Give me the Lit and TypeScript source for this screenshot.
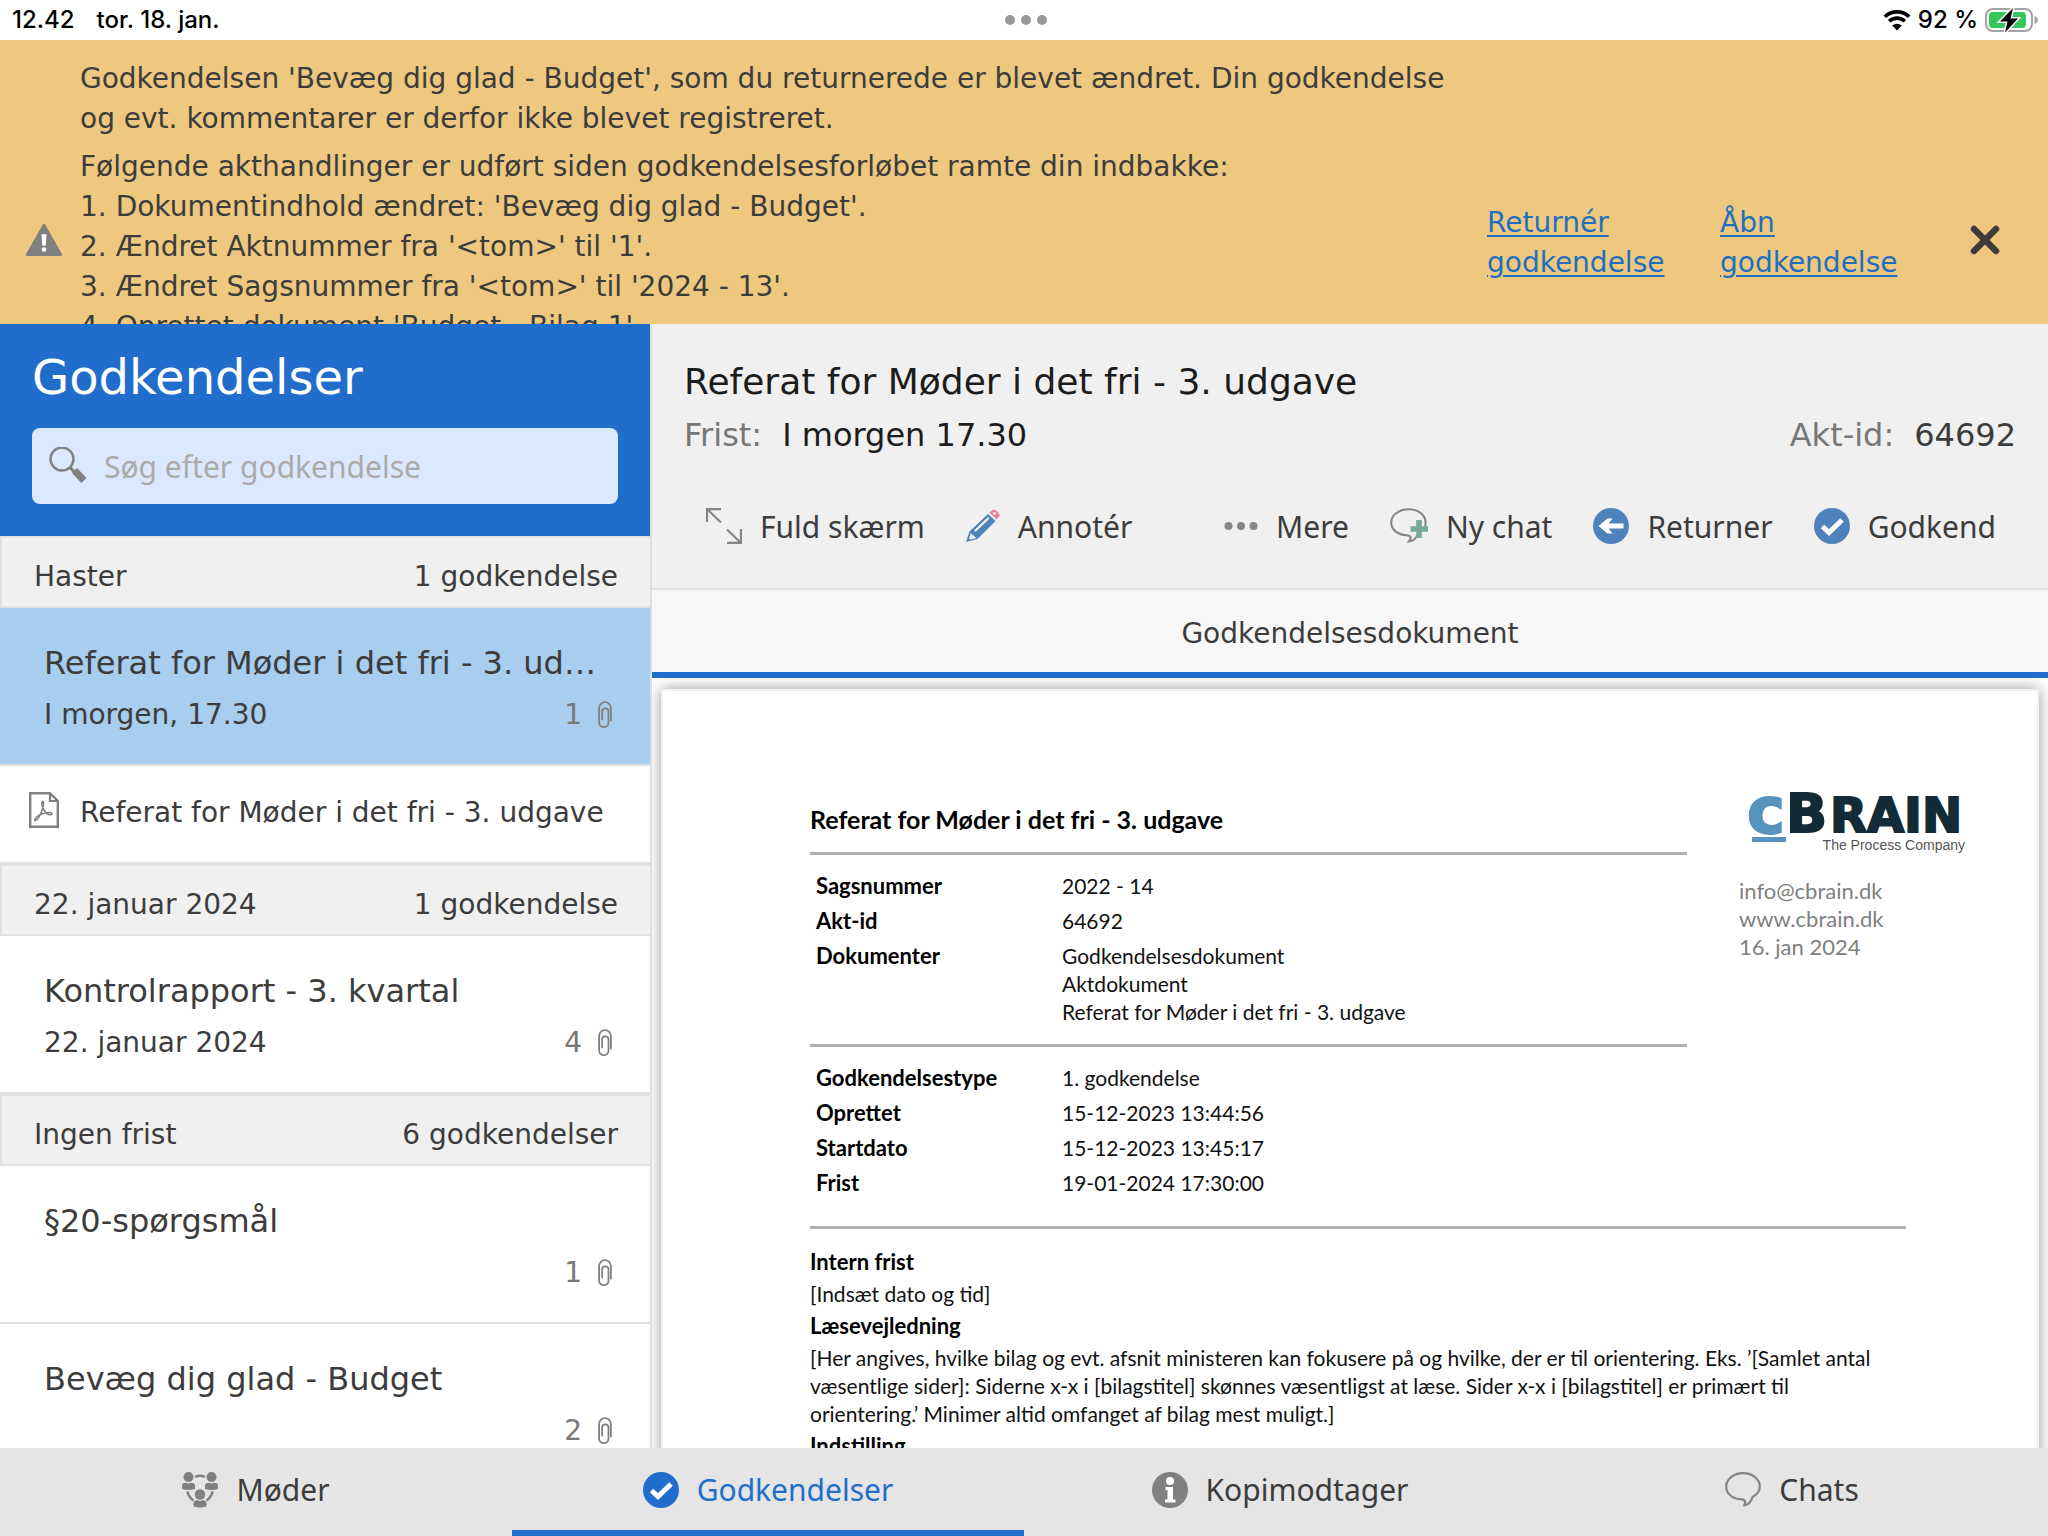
import { LitElement, html, css, svg, nothing, type TemplateResult } from "lit";
import { customElement, property, state } from "lit/decorators.js";
import { classMap } from "lit/directives/class-map.js";

const icons: Record<string, TemplateResult> = {
  warning: html`<svg width="36" height="32" viewBox="0 0 36 32" aria-hidden="true">${svg`
    <path d="M18 1.5 34.5 30.5H1.5Z" fill="#808080" stroke="#808080" stroke-width="3" stroke-linejoin="round"/>
    <path d="M16.2 11h3.6l-.7 10h-2.2z" fill="#fff" stroke="#fff" stroke-width="1.4" stroke-linejoin="round"/>
    <circle cx="18" cy="25.5" r="2.3" fill="#fff"/>`}</svg>`,
  close: html`<svg width="30" height="30" viewBox="0 0 30 30" aria-hidden="true">${svg`
    <path d="M4 4 26 26M26 4 4 26" stroke="#3c3c3c" stroke-width="6.5" stroke-linecap="round"/>`}</svg>`,
  search: html`<svg width="38" height="38" viewBox="0 0 38 38" aria-hidden="true">${svg`
    <circle cx="13" cy="12" r="11.5" fill="none" stroke="#808080" stroke-width="2.4"/>
    <path d="M21 20.5 25 24.5" stroke="#808080" stroke-width="3"/>
    <path d="M25.5 23.5 35 33.5" stroke="#808080" stroke-width="7"/>`}</svg>`,
  clip: html`<svg width="14" height="28" viewBox="0 0 14 28" aria-hidden="true">${svg`
    <path d="M12.9 19.5V7a5.9 5.9 0 0 0-11.8 0v14.5a4.7 4.7 0 0 0 9.4 0V10.5a3.2 3.2 0 0 0-6.4 0V18.5" fill="none" stroke="#808080" stroke-width="1.8" stroke-linecap="round"/>`}</svg>`,
  pdf: html`<svg width="30" height="36" viewBox="0 0 30 36" aria-hidden="true">${svg`
    <path d="M1.2 1.2H21L28.8 9V34.8H1.2Z" fill="none" stroke="#808080" stroke-width="2.4"/>
    <path d="M21 1V9H29" fill="none" stroke="#808080" stroke-width="2.2"/>
    <path d="M14 9.5c-2 0-1 4.5.6 7.8 1.6 3.2 4.6 5.6 7.2 5.4 2-.2 1.3-2.2-1.5-2.2-4.5 0-9.5 2-12 4-2.5 2-3.2 4.5-1.8 4 2-.7 4.7-5.5 6.3-9.8 1.2-3.3 2.6-9.2 1.2-9.2Z" fill="none" stroke="#808080" stroke-width="1.6"/>`}</svg>`,
  expand: html`<svg width="36" height="36" viewBox="0 0 36 36" aria-hidden="true">${svg`
    <path d="M1 14V1.2H15M1.5 1.5 15 14.5M35 21V34.8H21M34.5 34.5 21 21.5" fill="none" stroke="#858585" stroke-width="2.2"/>`}</svg>`,
  pencil: html`<svg width="34" height="34" viewBox="0 0 34 34" aria-hidden="true">${svg`
    <path d="M0 33 3.5 22.5 22 5 29.5 12 11.5 30Z" fill="#4d82bb"/>
    <path d="M9.5 21.5 22 9.5" stroke="#f0f0f0" stroke-width="2.4" stroke-linecap="round"/>
    <path d="M4.8 24.2 10.3 29 4.5 30.8 3 29.3Z" fill="#f0f0f0"/>
    <path d="M23.5 3.7 26.5 1Q28-.2 29.5 1L33 4.5Q34.2 6 33 7.5L30.6 10.5Z" fill="#e6849a"/>
    <circle cx="28.5" cy="4.5" r="1.4" fill="#f0f0f0"/>`}</svg>`,
  more: html`<svg width="34" height="10" viewBox="0 0 34 10" aria-hidden="true">${svg`
    <g fill="#858585"><circle cx="4.5" cy="5" r="4"/><circle cx="17" cy="5" r="4"/><circle cx="29.5" cy="5" r="4"/></g>`}</svg>`,
  newchat: html`<svg width="38" height="36" viewBox="0 0 38 36" aria-hidden="true">${svg`
    <path d="M35 18.5C38 8 29 1.2 18.5 1.2 8.5 1.2 1.2 7.5 1.2 14.5c0 7 6.5 12.5 15.5 12.7 4 .3 5.3 2.6 2.3 6.3 4.5-.5 7-2.8 8.3-6.5" fill="none" stroke="#858585" stroke-width="2.1"/>
    <path d="M29 12V30M20.5 21H38" stroke="#78a998" stroke-width="5.6"/>`}</svg>`,
  back: html`<svg width="36" height="36" viewBox="0 0 36 36" aria-hidden="true">${svg`
    <circle cx="18" cy="18" r="18" fill="#4d82bb"/>
    <path d="M5.5 18 14.5 10.5H19.5L15.5 15.5H30.5V20.5H15.5L19.5 25.5H14.5Z" fill="#fff"/>`}</svg>`,
  check: html`<svg width="36" height="36" viewBox="0 0 36 36" aria-hidden="true">${svg`
    <circle cx="18" cy="18" r="18" fill="currentColor"/>
    <path d="M8.5 18.5 15 24.5 28 12" fill="none" stroke="#fff" stroke-width="5"/>`}</svg>`,
  info: html`<svg width="36" height="36" viewBox="0 0 36 36" aria-hidden="true">${svg`
    <circle cx="18" cy="18" r="18" fill="#808080"/>
    <circle cx="18" cy="9" r="4" fill="#fff"/>
    <path d="M13.5 15H21V27.5H23.5V30.5H13V27.5H15.5V18H13.5Z" fill="#fff"/>`}</svg>`,
  chat: html`<svg width="36" height="36" viewBox="0 0 36 36" aria-hidden="true">${svg`
    <path d="M18 1.2C8.5 1.2 1.2 7.5 1.2 14.5c0 7 6 12 14 12.7 5 .3 6.3 2.6 3.8 6.3 5-.7 7.2-3.8 8.6-8.5 4.4-2.5 7.2-5.8 7.2-10.5C34.8 7 27.5 1.2 18 1.2Z" fill="none" stroke="#858585" stroke-width="2.2" stroke-linejoin="round"/>`}</svg>`,
  meetings: html`<svg width="36" height="36" viewBox="0 0 36 36" aria-hidden="true">${svg`
    <g fill="#808080">
      <circle cx="6.5" cy="5" r="5"/><path d="M0 17v-3q0-3.2 3.5-3.2 3 1.4 6 0 3.5 0 3.5 3.2v3q-6.5 1.8-13 0Z"/>
      <circle cx="29.5" cy="5" r="5"/><path d="M23 17v-3q0-3.2 3.5-3.2 3 1.4 6 0 3.5 0 3.5 3.2v3q-6.5 1.8-13 0Z"/>
      <circle cx="18" cy="22.5" r="5.2"/><path d="M11.5 34.5v-3q0-3.2 3.5-3.2 3 1.4 6 0 3.5 0 3.5 3.2v3q-6.5 1.8-13 0Z"/>
    </g>
    <path d="M13 4.8Q18 2.5 23 4.8M5.2 19.5Q7 25.5 11.5 28.5M30.8 19.5Q29 25.5 24.5 28.5" fill="none" stroke="#808080" stroke-width="2.5"/>`}</svg>`,
  wifi: html`<svg width="28" height="22" viewBox="0 0 28 22" aria-hidden="true">${svg`
    <path d="M1.8 7.8A17.5 17.5 0 0 1 26.2 7.8M6.2 12.3A11.2 11.2 0 0 1 21.8 12.3" fill="none" stroke="#000" stroke-width="3.6"/>
    <path d="M14 21.5 9.2 16.5Q14 12.8 18.8 16.5Z" fill="#000"/>`}</svg>`,
  battery: html`<svg width="54" height="28" viewBox="0 0 54 28" aria-hidden="true">${svg`
    <rect x="1" y="3" width="46" height="22" rx="7" fill="none" stroke="#a3a3a3" stroke-width="2"/>
    <path d="M49.5 10Q53 11.5 53 14T49.5 18Z" fill="#a3a3a3"/>
    <rect x="4" y="6" width="37" height="16" rx="4" fill="#35c759"/>
    <path d="M28 2 15 15.5H22.5L20 26.5 33 12.5H25.5Z" fill="#000" stroke="#fff" stroke-width="3" paint-order="stroke"/>`}</svg>`,
};

const shared = css`
  :host { display: block; box-sizing: border-box; font-family: "DejaVu Sans", Verdana, sans-serif; color: #3c3c3c; }
  *, *::before, *::after { box-sizing: border-box; }
  h1, h2, p, ol, ul, dl, dd { margin: 0; padding: 0; font-weight: 400; }
  ul, ol { list-style: none; }
  button { margin: 0; padding: 0; border: 0; background: none; font: inherit; color: inherit; text-align: left; cursor: pointer; }
  svg { display: block; flex: none; }
`;

@customElement("status-bar")
class StatusBar extends LitElement {
  static styles = [shared, css`
    .bar { display: grid; grid-template-columns: 1fr auto 1fr; align-items: center; height: 40px; padding: 0 9px 0 12px; background: #fff; color: #000; font: 500 24px/40px Inter, sans-serif; }
    .left { display: flex; gap: 22px; }
    .dots { display: flex; gap: 6px; }
    .dot { width: 10px; height: 10px; border-radius: 50%; background: #999; }
    .right { display: flex; justify-content: flex-end; align-items: center; gap: 7px; }
  `];
  render() {
    return html`<div class="bar">
      <div class="left"><span>12.42</span><span>tor. 18. jan.</span></div>
      <div class="dots"><span class="dot"></span><span class="dot"></span><span class="dot"></span></div>
      <div class="right">${icons.wifi}<span>92 %</span>${icons.battery}</div>
    </div>`;
  }
}

@customElement("notice-banner")
class NoticeBanner extends LitElement {
  static styles = [shared, css`
    .banner { height: 284px; background: #eec87f; overflow: hidden; }
    .row { display: flex; align-items: center; min-height: 400px; padding: 0 48px 0 26px; font-size: 28px; line-height: 40px; }
    .text { flex: 1; align-self: flex-start; padding: 19px 22px 0 18px; }
    .text p { margin-bottom: 8px; }
    .links { display: flex; gap: 56px; padding: 6px 73px 0 0; }
    .link { width: 177px; color: #1f6fc0; text-decoration: underline; text-decoration-thickness: 2px; text-underline-offset: 3px; }
  `];
  render() {
    const events = [
      "Dokumentindhold ændret: 'Bevæg dig glad - Budget'.",
      "Ændret Aktnummer fra '<tom>' til '1'.",
      "Ændret Sagsnummer fra '<tom>' til '2024 - 13'.",
      "Oprettet dokument 'Budget - Bilag 1'",
    ];
    return html`<section class="banner"><div class="row">
      ${icons.warning}
      <div class="text">
        <p>Godkendelsen 'Bevæg dig glad - Budget', som du returnerede er blevet ændret. Din godkendelse og evt. kommentarer er derfor ikke blevet registreret.</p>
        <div>Følgende akthandlinger er udført siden godkendelsesforløbet ramte din indbakke:</div>
        <ol>${events.map((e, i) => html`<li>${i + 1}. ${e}</li>`)}</ol>
      </div>
      <div class="links">
        <a class="link" href="#returner">Returnér godkendelse</a>
        <a class="link" href="#aabn">Åbn godkendelse</a>
      </div>
      <button aria-label="Luk">${icons.close}</button>
    </div></section>`;
  }
}

interface Approval { title: string; due: string; count: number; docs?: string[]; }
interface Group { name: string; total: string; items: Approval[]; }

const groups: Group[] = [
  { name: "Haster", total: "1 godkendelse", items: [
    { title: "Referat for Møder i det fri - 3. udgave", due: "I morgen, 17.30", count: 1, docs: ["Referat for Møder i det fri - 3. udgave"] }] },
  { name: "22. januar 2024", total: "1 godkendelse", items: [
    { title: "Kontrolrapport - 3. kvartal", due: "22. januar 2024", count: 4 }] },
  { name: "Ingen frist", total: "6 godkendelser", items: [
    { title: "§20-spørgsmål", due: "", count: 1 },
    { title: "Bevæg dig glad - Budget", due: "", count: 2 }] },
];

@customElement("approval-list")
class ApprovalList extends LitElement {
  static styles = [shared, css`
    :host { overflow: hidden; background: #fff; border-right: 2px solid #dfdfdf; font-size: 28px; line-height: 36px; }
    .head { height: 212px; padding: 25px 32px 32px; background: #216dcc; }
    .heading { margin-bottom: 23px; color: #fff; font-size: 48px; line-height: 56px; }
    .search { display: flex; align-items: center; gap: 17px; height: 76px; padding: 0 17px; border-radius: 8px; background: #dae9fd; }
    .input { flex: 1; min-width: 0; padding: 2px 0 0; border: 0; outline: 0; background: none; color: #3c3c3c; font: 30px/40px "Noto Sans", sans-serif; }
    .input::placeholder { color: #aaa; opacity: 1; }
    .group { display: flex; justify-content: space-between; height: 72px; padding: 21px 32px 0; border: 2px solid #e0e0e0; border-right: 0; background: #f0f0f0; }
    .item { display: grid; grid-template-columns: 1fr auto; align-content: start; row-gap: 14px; width: 100%; height: 158px; padding: 35px 38px 0 44px; border-bottom: 2px solid #e0e0e0; }
    .item.selected { background: #a7cdef; }
    .title { grid-column: 1 / -1; overflow: hidden; font-size: 32px; line-height: 40px; white-space: nowrap; text-overflow: ellipsis; padding-right: 10px; }
    .count { display: flex; align-items: center; gap: 16px; height: 36px; color: #777; }
    .doc { display: flex; align-items: center; gap: 21px; width: 100%; height: 98px; padding: 0 29px 8px; border-bottom: 2px solid #e0e0e0; white-space: nowrap; }
    .doc span { padding-top: 6px; }
  `];
  @state() private selected = "Haster0";
  render() {
    return html`
      <header class="head">
        <h1 class="heading">Godkendelser</h1>
        <label class="search">${icons.search}<input class="input" type="search" placeholder="Søg efter godkendelse" aria-label="Søg efter godkendelse" /></label>
      </header>
      ${groups.map((g) => html`
        <div class="group"><span>${g.name}</span><span>${g.total}</span></div>
        ${g.items.map((it, i) => {
          const id = g.name + i;
          const open = this.selected === id;
          return html`
            <button class=${classMap({ item: true, selected: open })} @click=${() => (this.selected = id)}>
              <span class="title">${it.title}</span>
              <span>${it.due}</span>
              <span class="count">${it.count}${icons.clip}</span>
            </button>
            ${open ? (it.docs ?? []).map((d) => html`<button class="doc">${icons.pdf}<span>${d}</span></button>`) : nothing}`;
        })}`)}`;
  }
}

@customElement("document-page")
class DocumentPage extends LitElement {
  static styles = [shared, css`
    :host { font-family: Lato, Carlito, Calibri, sans-serif; color: #111; }
    .page { display: grid; grid-template-columns: minmax(0, 1fr) 298px; margin: 11px 9px 0; padding: 114px 0 0 147px; min-height: 1000px; border: 2px solid #f0f0f0; background: #fff; box-shadow: 0 0 14px rgba(0, 0, 0, 0.4); font-size: 21px; line-height: 28px; align-content: start; }
    .title { font-size: 25px; line-height: 28px; font-weight: 700; padding-bottom: 19px; color: #000; }
    .block { margin-right: 52px; padding-top: 17px; border-top: 3px solid #b0b0b0; }
    table { border-collapse: collapse; margin-left: 6px; }
    th { width: 246px; padding: 0 0 7px; text-align: left; vertical-align: top; font-size: 22px; font-weight: 700; color: #000; }
    td { padding: 0 0 7px; }
    .first { height: 192px; }
    .second { height: 182px; }
    .logo { overflow: visible; }
    .contact { margin-top: 12px; color: #808080; font-size: 22px; line-height: 28px; }
    .body { grid-column: 1 / -1; margin-right: 131px; padding-top: 19px; border-top: 3px solid #b0b0b0; }
    .body h2 { font-size: 22px; line-height: 28px; font-weight: 700; margin-bottom: 4px; color: #000; }
    .body p { margin-bottom: 4px; padding-right: 20px; }
  `];
  private rows(data: [string, string[]][]) {
    return html`<table>${data.map(([k, v]) => html`<tr><th scope="row">${k}</th><td>${v.map((l) => html`<div>${l}</div>`)}</td></tr>`)}</table>`;
  }
  render() {
    return html`<article class="page">
      <div>
        <h1 class="title">Referat for Møder i det fri - 3. udgave</h1>
        <div class="block first">${this.rows([
          ["Sagsnummer", ["2022 - 14"]],
          ["Akt-id", ["64692"]],
          ["Dokumenter", ["Godkendelsesdokument", "Aktdokument", "Referat for Møder i det fri - 3. udgave"]],
        ])}</div>
        <div class="block second">${this.rows([
          ["Godkendelsestype", ["1. godkendelse"]],
          ["Oprettet", ["15-12-2023 13:44:56"]],
          ["Startdato", ["15-12-2023 13:45:17"]],
          ["Frist", ["19-01-2024 17:30:00"]],
        ])}</div>
      </div>
      <div>
        <svg class="logo" width="240" height="60" viewBox="0 0 240 60" role="img" aria-label="cBrain">${svg`
          <g font-family="DejaVu Sans" font-weight="700" fill="#132b37" stroke="#132b37" stroke-width="2">
            <text x="8" y="28" font-size="64" fill="#5892bf" stroke="#5892bf">c</text>
            <text x="47" y="27" font-size="54">B</text>
            <text x="91" y="27" font-size="48">RAIN</text>
          </g>
          <rect x="13" y="32" width="34" height="5" fill="#5892bf"/>
          <text x="226" y="45" text-anchor="end" font-family="Liberation Sans" font-size="14" fill="#555">The Process Company</text>`}</svg>
        <div class="contact"><div>info@cbrain.dk</div><div>www.cbrain.dk</div><div>16. jan 2024</div></div>
      </div>
      <div class="body">
        <h2>Intern frist</h2>
        <p>[Indsæt dato og tid]</p>
        <h2>Læsevejledning</h2>
        <p>[Her angives, hvilke bilag og evt. afsnit ministeren kan fokusere på og hvilke, der er til orientering. Eks. ’[Samlet antal væsentlige sider]: Siderne x-x i [bilagstitel] skønnes væsentligst at læse. Sider x-x i [bilagstitel] er primært til orientering.’ Minimer altid omfanget af bilag mest muligt.]</p>
        <h2>Indstilling</h2>
      </div>
    </article>`;
  }
}

@customElement("approval-detail")
class ApprovalDetail extends LitElement {
  static styles = [shared, css`
    :host { display: flex; flex-direction: column; min-width: 0; overflow: hidden; background: #fff; }
    .head { height: 266px; padding: 34px 32px 0; border-bottom: 2px solid #e0e0e0; background: #f0f0f0; color: #1c1c1c; }
    .title { font-size: 36px; line-height: 48px; }
    .meta { display: flex; justify-content: space-between; font-size: 32px; line-height: 40px; padding-top: 9px; }
    .meta dt { color: #777; }
    .meta dd { margin: 0; }
    .pair { display: flex; gap: 20px; }
    .id { color: #3c3c3c; }
    .tools { display: flex; gap: 41px; padding: 50px 20px 0 22px; color: #3c3c3c; font: 30px/40px "Noto Sans", sans-serif; }
    .tool { display: flex; align-items: center; gap: 18px; white-space: nowrap; }
    .tool .label { padding-top: 2px; }
    .spacer { flex: 1; }
    .blue { color: #4d82bb; }
    .tab { height: 88px; padding-top: 6px; border-bottom: 6px solid #216dcc; background: #f7f7f7; font-size: 28px; line-height: 76px; text-align: center; }
    .view { flex: 1; min-height: 0; overflow: hidden; }
  `];
  private tool(icon: string, label: string) {
    return html`<button class="tool"><span class="blue">${icons[icon]}</span><span class="label">${label}</span></button>`;
  }
  render() {
    return html`
      <header class="head">
        <h1 class="title">Referat for Møder i det fri - 3. udgave</h1>
        <dl class="meta">
          <div class="pair"><dt>Frist:</dt><dd>I morgen 17.30</dd></div>
          <div class="pair id"><dt>Akt-id:</dt><dd>64692</dd></div>
        </dl>
        <div class="tools">
          ${this.tool("expand", "Fuld skærm")}${this.tool("pencil", "Annotér")}
          <span class="spacer"></span>
          ${this.tool("more", "Mere")}${this.tool("newchat", "Ny chat")}${this.tool("back", "Returner")}${this.tool("check", "Godkend")}
        </div>
      </header>
      <button class="tab">Godkendelsesdokument</button>
      <div class="view"><document-page></document-page></div>`;
  }
}

@customElement("tab-bar")
class TabBar extends LitElement {
  static styles = [shared, css`
    .bar { display: grid; grid-template-columns: repeat(4, 1fr); height: 88px; background: #e5e5e5; font: 30px/40px "Noto Sans", sans-serif; }
    .tab { display: flex; align-items: center; justify-content: center; gap: 18px; padding: 2px 0 0; border-bottom: 6px solid transparent; }
    .tab.active { color: #216dcc; border-color: #216dcc; }
  `];
  @property() active = "Godkendelser";
  render() {
    const tabs = [["meetings", "Møder"], ["check", "Godkendelser"], ["info", "Kopimodtager"], ["chat", "Chats"]];
    return html`<nav class="bar">${tabs.map(([icon, label]) => html`
      <button class=${classMap({ tab: true, active: label === this.active })} @click=${() => (this.active = label)}>${icons[icon]}<span>${label}</span></button>`)}</nav>`;
  }
}

@customElement("app-root")
class AppRoot extends LitElement {
  static styles = [shared, css`
    :host { display: flex; flex-direction: column; height: 100vh; overflow: hidden; background: #fff; }
    .main { display: grid; grid-template-columns: 652px minmax(0, 1fr); grid-template-rows: minmax(0, 1fr); flex: 1; min-height: 0; }
  `];
  render() {
    return html`
      <status-bar></status-bar>
      <notice-banner></notice-banner>
      <main class="main"><approval-list></approval-list><approval-detail></approval-detail></main>
      <tab-bar></tab-bar>`;
  }
}
